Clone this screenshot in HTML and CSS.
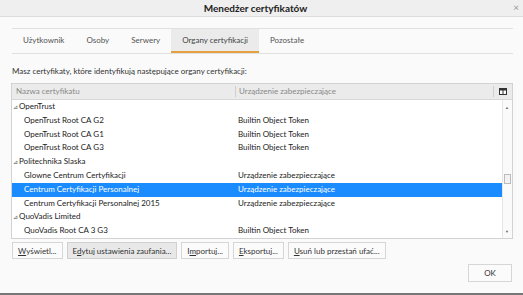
FILE: index.html
```html
<!DOCTYPE html>
<html lang="pl">
<head>
  <meta charset="UTF-8">
  <title>Menedżer certyfikatów</title>
  <link rel="stylesheet" href="styles.css">
</head>
<body>
  <div class="dialog">
    <div class="titlebar">
      <span class="title">Menedżer certyfikatów</span>
      <span class="close">×</span>
    </div>

    <div class="content">
      <div class="tabs">
        <span class="tab">Użytkownik</span>
        <span class="tab">Osoby</span>
        <span class="tab">Serwery</span>
        <span class="tab active">Organy certyfikacji</span>
        <span class="tab">Pozostałe</span>
      </div>

      <p class="intro">Masz certyfikaty, które identyfikują następujące organy certyfikacji:</p>

      <div class="tree">
        <div class="tree-head">
          <div class="col-name">Nazwa certyfikatu</div>
          <div class="col-device">Urządzenie zabezpieczające</div>
          <div class="col-picker">
            <svg width="8" height="7" viewBox="0 0 8 7"><rect x="0.5" y="0.5" width="7" height="6" fill="#fff" stroke="#333"/><rect x="0" y="0" width="8" height="2.5" fill="#333"/><rect x="3.5" y="2" width="1" height="5" fill="#333"/></svg>
          </div>
        </div>
        <div class="tree-body">
          <div class="rows">
            <div class="row group"><span class="twisty">⊿</span>OpenTrust</div>
            <div class="row"><span class="name">OpenTrust Root CA G2</span><span class="device">Builtin Object Token</span></div>
            <div class="row"><span class="name">OpenTrust Root CA G1</span><span class="device">Builtin Object Token</span></div>
            <div class="row"><span class="name">OpenTrust Root CA G3</span><span class="device">Builtin Object Token</span></div>
            <div class="row group"><span class="twisty">⊿</span>Politechnika Slaska</div>
            <div class="row"><span class="name">Glowne Centrum Certyfikacji</span><span class="device">Urządzenie zabezpieczające</span></div>
            <div class="row selected"><span class="name">Centrum Certyfikacji Personalnej</span><span class="device">Urządzenie zabezpieczające</span></div>
            <div class="row"><span class="name">Centrum Certyfikacji Personalnej 2015</span><span class="device">Urządzenie zabezpieczające</span></div>
            <div class="row group"><span class="twisty">⊿</span>QuoVadis Limited</div>
            <div class="row"><span class="name">QuoVadis Root CA 3 G3</span><span class="device">Builtin Object Token</span></div>
          </div>
          <div class="scrollbar">
            <span class="arrow">▲</span>
            <span class="thumb"></span>
            <span class="arrow">▼</span>
          </div>
        </div>
      </div>

      <div class="actions">
        <button class="btn"><u>W</u>yświetl...</button>
        <button class="btn hover">E<u>d</u>ytuj ustawienia zaufania...</button>
        <button class="btn">I<u>m</u>portuj...</button>
        <button class="btn"><u>E</u>ksportuj...</button>
        <button class="btn"><u>U</u>suń lub przestań ufać...</button>
      </div>

      <div class="footer">
        <button class="btn ok">OK</button>
      </div>
    </div>
  </div>
</body>
</html>
```

FILE: styles.css
```css
body {
  margin: 0;
  font-family: Lato, "Open Sans", sans-serif;
  font-size: 8px;
  color: #222;
  background-color: #fafafa;
}

.dialog {
  width: 523px;
  height: 295px;
  box-sizing: border-box;
  border-bottom: 2px solid #777;
  overflow: hidden;
}

.titlebar {
  height: 16px;
  background-color: #efefef;
  border-bottom: 1px solid #dcdcdc;
  display: flex;
  align-items: center;
  justify-content: center;
  position: relative;
}

.title {
  font-weight: bold;
  font-size: 10px;
  color: #222;
  margin-right: 12px;
}

.close {
  position: absolute;
  right: 4px;
  top: 1px;
  font-size: 10px;
  color: #999;
}

.content {
  padding: 0 10px 0 12px;
}

.tabs {
  margin-top: 11px;
  height: 24px;
  border-top: 1px solid #e0e0e0;
  border-bottom: 1px solid #e0e0e0;
  display: flex;
}

.tab {
  padding: 0 11px;
  line-height: 23px;
  color: #555;
}

.active {
  background-color: #ebebeb;
  box-shadow: inset 0 -2px 0 #e6a040;
  color: #444;
}

.intro {
  margin: 10px 0 0;
  line-height: 14px;
  color: #333;
}

.tree {
  margin-top: 5px;
  margin-left: -1px;
  border: 1px solid #d2d2d2;
  background-color: #fff;
}

.tree-head {
  display: flex;
  height: 15px;
  background-color: #ebebeb;
  border-bottom: 1px solid #d8d8d8;
  color: #888;
  align-items: center;
}

.col-name {
  width: 224px;
  padding-left: 4px;
  box-sizing: border-box;
  border-right: 1px solid #cfcfcf;
  height: 11px;
  line-height: 11px;
}

.col-device {
  flex: 1;
  padding-left: 3px;
  border-right: 1px solid #cfcfcf;
  height: 11px;
  line-height: 11px;
}

.col-picker {
  width: 18px;
  display: flex;
  justify-content: center;
  align-items: center;
}

.tree-body {
  display: flex;
  height: 138px;
}

.rows {
  flex: 1;
}

.row {
  display: flex;
  height: 13.8px;
  line-height: 13.8px;
  color: #222;
}

.row .name {
  width: 212px;
  padding-left: 12px;
}

.row .device {
  padding-left: 2px;
}

.group {
  padding-left: 1px;
}

.twisty {
  font-family: "DejaVu Sans", sans-serif;
  font-size: 6px;
  color: #555;
  margin-right: 1px;
}

.selected {
  background-color: #1a8cff;
  color: #fff;
}

.scrollbar {
  width: 9px;
  border-left: 1px solid #e6e6e6;
  background-color: #fafafa;
  display: flex;
  flex-direction: column;
  align-items: center;
  padding-top: 74px;
  position: relative;
}

.arrow {
  position: absolute;
  left: 2px;
  font-size: 4px;
  color: #666;
}

.arrow:first-child {
  top: 5px;
}

.arrow:last-child {
  bottom: 4px;
}

.thumb {
  width: 7px;
  height: 10px;
  border: 1px solid #bbb;
  background-color: #f2f2f2;
  box-sizing: border-box;
}

.actions {
  display: flex;
  gap: 4px;
  margin-top: 3px;
}

.btn {
  font-family: inherit;
  font-size: 8px;
  color: #333;
  background-color: #fbfbfb;
  border: 1px solid #d6d6d6;
  height: 17px;
  padding: 0 5px;
  margin: 0;
}

.btn u {
  text-decoration-thickness: 1px;
}

.hover {
  background-color: #e8e8e8;
  border-color: #d0d0d0;
}

.footer {
  display: flex;
  justify-content: flex-end;
  margin-top: 5px;
  padding-right: 1px;
}

.ok {
  width: 44px;
  height: 18px;
}
```
